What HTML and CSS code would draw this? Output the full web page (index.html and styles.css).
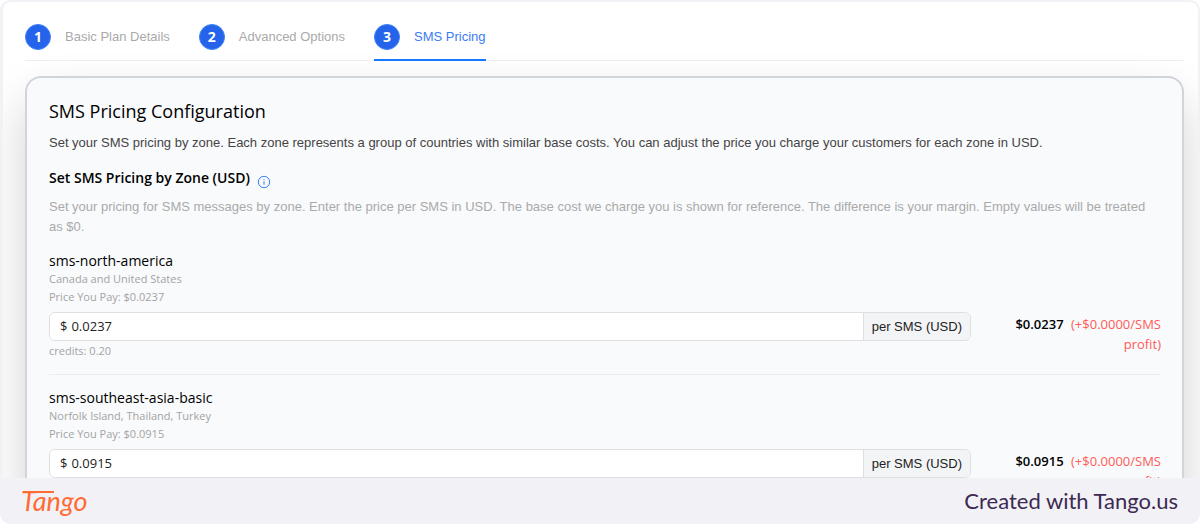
FILE: index.html
```
<!DOCTYPE html>
<html lang="en">
<head>
  <meta charset="UTF-8" />
  <meta name="viewport" content="width=device-width, initial-scale=1.0"/>
  <title>SMS Pricing</title>
  <link rel="stylesheet" href="styles.css">
</head>
<body>

  <div class="frame">
    <main class="page">
      <nav class="tabs">
        <button class="tab"><span class="step">1</span>Basic Plan Details</button>
        <button class="tab"><span class="step">2</span>Advanced Options</button>
        <button class="tab active"><span class="step">3</span>SMS Pricing</button>
      </nav>

      <section class="card">
        <h2>SMS Pricing Configuration</h2>
        <p class="intro">Set your SMS pricing by zone. Each zone represents a group of countries with similar base costs. You can adjust the price you charge your customers for each zone in USD.</p>

        <h3>Set SMS Pricing by Zone (USD)
          <svg class="info" viewBox="0 0 14 14" width="14" height="14">
            <circle cx="7" cy="7" r="5.7" fill="none" stroke="currentColor"/>
            <path d="M7 6.1v3.7M7 4v1.1" stroke="currentColor"/>
          </svg>
        </h3>
        <p class="hint">Set your pricing for SMS messages by zone. Enter the price per SMS in USD. The base cost we charge you is shown for reference. The difference is your margin. Empty values will be treated as&nbsp;$0.</p>

        <div class="zone">
          <label class="zone-name" for="north-america">sms-north-america</label>
          <p class="note">Canada and United States</p>
          <p class="note">Price You Pay: $0.0237</p>
          <div class="zone-row">
            <div class="price-group">
              <div class="price-input">
                <span>$</span>
                <input type="text" id="north-america" value="0.0237"/>
              </div>
              <span class="addon">per SMS (USD)</span>
            </div>
            <div class="total">
              <strong>$0.0237</strong> <span class="profit">(+$0.0000/SMS profit)</span>
            </div>
          </div>
          <p class="note credits">credits: 0.20</p>
        </div>

        <div class="zone">
          <label class="zone-name" for="southeast-asia">sms-southeast-asia-basic</label>
          <p class="note">Norfolk Island, Thailand, Turkey</p>
          <p class="note">Price You Pay: $0.0915</p>
          <div class="zone-row">
            <div class="price-group">
              <div class="price-input">
                <span>$</span>
                <input type="text" id="southeast-asia" value="0.0915"/>
              </div>
              <span class="addon">per SMS (USD)</span>
            </div>
            <div class="total">
              <strong>$0.0915</strong> <span class="profit">(+$0.0000/SMS profit)</span>
            </div>
          </div>
        </div>
      </section>
    </main>

    <footer class="footer">
      <span class="logo">Tango</span>
      <span class="credit">Created with Tango.us</span>
    </footer>
  </div>

</body>
</html>
```

FILE: styles.css
```
* {
  box-sizing: border-box;
}

body {
  margin: 0;
  font-family: "Liberation Sans", sans-serif;
  font-size: 13px;
  line-height: 20px;
  color: #222;
  background-color: #fff;
}

h2, h3, p {
  margin: 0;
}

h2, h3, .zone-name, .step, .note, .price-input, .total {
  font-family: "Open Sans", sans-serif;
}

.frame {
  display: flex;
  flex-direction: column;
  height: 100vh;
  overflow: hidden;
  padding: 2px 2px 0 3px;
  border-radius: 10px;
  background-color: #f2f1f6;
}

.page {
  flex: 1;
  min-height: 0;
  overflow: hidden;
  padding: 12px 14px 0 22px;
  border-radius: 8px 8px 0 0;
  background-color: #fff;
}

.tabs {
  display: flex;
  gap: 29px;
  margin-bottom: 15px;
  border-bottom: 1px solid #f0f0f0;
}

.tab {
  display: flex;
  align-items: center;
  gap: 14px;
  height: 47px;
  margin-bottom: -1px;
  padding: 0;
  border: none;
  border-bottom: 2px solid transparent;
  background: none;
  font: inherit;
  color: #aaa;
  cursor: pointer;
}

.tab.active {
  color: #3b7cf6;
  border-bottom-color: #1677ff;
}

.step {
  width: 26px;
  height: 26px;
  border: 1px solid #3b82f6;
  border-radius: 50%;
  background-color: #2563eb;
  color: #fff;
  font-size: 14px;
  font-weight: bold;
  line-height: 24px;
  text-align: center;
}

.card {
  padding: 22px 21px 22px 22px;
  border: 2px solid #d1d5db;
  border-radius: 16px;
  background-color: #f9fafc;
  box-shadow: 0 25px 50px rgba(0, 0, 0, 0.18);
}

h2 {
  font-size: 18px;
  font-weight: 500;
  line-height: 22px;
  color: #000;
}

.intro {
  margin-top: 11px;
  color: #444;
}

h3 {
  display: flex;
  gap: 7px;
  margin-top: 15px;
  font-size: 14px;
  font-weight: 600;
  color: #000;
}

.info {
  margin-top: 7px;
  color: #3b82f6;
}

.hint {
  margin-top: 8px;
  color: #aaa;
}

.zone {
  padding-bottom: 14px;
  margin-bottom: 14px;
  border-bottom: 1px solid #ebedf0;
}

.hint + .zone {
  margin-top: 15px;
}

.zone-name {
  display: block;
  font-size: 14px;
  font-weight: 500;
  line-height: 18px;
  color: #000;
}

.note {
  font-size: 11px;
  line-height: 18px;
  color: #a3a3a3;
}

.zone-row {
  display: grid;
  grid-template-columns: 1fr 166px;
  gap: 24px;
  height: 29px;
  margin-top: 6px;
}

.price-group {
  display: flex;
  height: 29px;
  border: 1px solid #dedfe1;
  border-radius: 6px;
  overflow: hidden;
}

.price-input {
  display: flex;
  flex: 1;
  align-items: center;
  gap: 4px;
  padding: 0 0 2px 10px;
  background-color: #fff;
}

.price-input input {
  flex: 1;
  min-width: 0;
  padding: 0;
  border: none;
  outline: none;
  background: none;
  font: inherit;
  color: inherit;
}

.addon {
  padding: 4px 8px;
  border-left: 1px solid #dedfe1;
  background-color: #f3f4f6;
}

.total {
  padding-top: 2px;
  text-align: right;
}

.total strong {
  margin-right: 4px;
  font-weight: 600;
  color: #000;
}

.profit {
  color: #ff5a57;
}

.credits {
  margin-top: 1px;
}

.footer {
  display: flex;
  align-items: center;
  justify-content: space-between;
  height: 46px;
  padding: 0 20px 0 18px;
}

.logo {
  position: relative;
  font-family: Lato, sans-serif;
  font-size: 27px;
  font-style: italic;
  color: #ff6b35;
}

/* long bar of the T */
.logo::before {
  content: "";
  position: absolute;
  top: 0;
  left: 3px;
  width: 30px;
  height: 2px;
  background-color: #ff6b35;
}

.credit {
  font-family: Lato, sans-serif;
  font-size: 22px;
  color: #3c2a52;
}
```
